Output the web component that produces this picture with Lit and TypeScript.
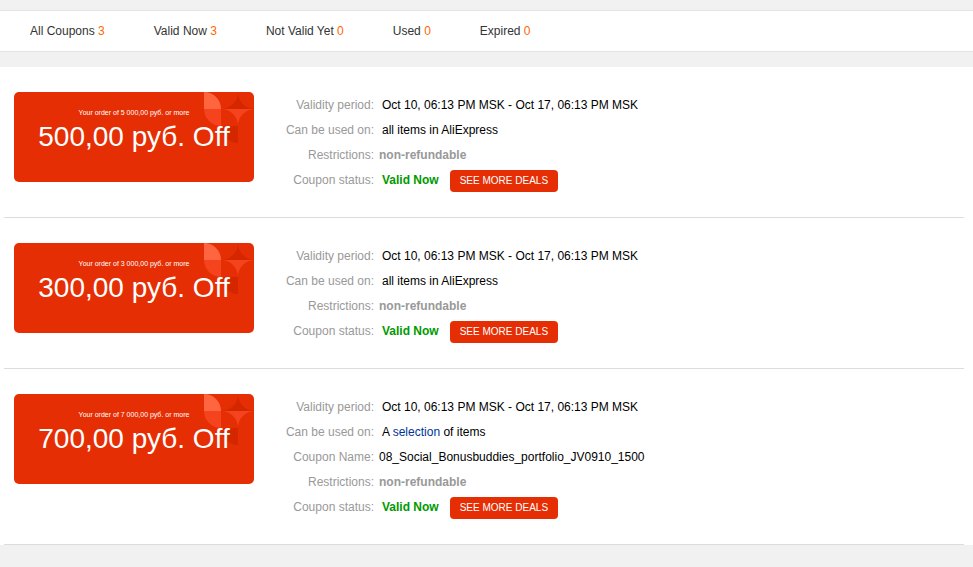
import { LitElement, html, css, TemplateResult } from "lit";
import { customElement, property } from "lit/decorators.js";

interface Coupon {
  amount: string;
  minimum: string;
  period: string;
  usedOn: TemplateResult;
  name?: string;
}

const PERIOD = "Oct 10, 06:13 PM MSK - Oct 17, 06:13 PM MSK";

const TABS: [string, number][] = [
  ["All Coupons", 3],
  ["Valid Now", 3],
  ["Not Valid Yet", 0],
  ["Used", 0],
  ["Expired", 0],
];

const COUPONS: Coupon[] = [
  { amount: "500,00", minimum: "5 000,00", period: PERIOD, usedOn: html`all items in AliExpress` },
  { amount: "300,00", minimum: "3 000,00", period: PERIOD, usedOn: html`all items in AliExpress` },
  {
    amount: "700,00",
    minimum: "7 000,00",
    period: PERIOD,
    usedOn: html`A <a class="link" href="#selection">selection</a> of items`,
    name: "08_Social_Bonusbuddies_portfolio_JV0910_1500",
  },
];

@customElement("coupon-card")
export class CouponCard extends LitElement {
  static styles = css`
    :host {
      display: block;
    }
    .card {
      position: relative;
      box-sizing: border-box;
      min-height: 90px;
      padding-top: 15px;
      border-radius: 5px;
      overflow: hidden;
      background: #e62e04;
      color: #fff;
      text-align: center;
    }
    .ornament {
      position: absolute;
      top: 0;
      right: 0;
      width: 50px;
      height: 51px;
    }
    .minimum,
    .amount {
      position: relative;
      margin: 0;
    }
    .minimum {
      font-size: 7px;
      line-height: 12px;
    }
    .amount {
      font-size: 28px;
      line-height: 36px;
    }
  `;

  @property() amount = "";
  @property() minimum = "";

  render() {
    return html`
      <div class="card">
        <svg class="ornament" viewBox="0 0 50 51" aria-hidden="true">
          <path fill="#ff6640" d="M0 0A17 17 0 0 1 17 17H0Z" />
          <path fill="#f5431e" d="M0 17H17V34A17 17 0 0 1 0 17Z" />
          <path fill="#d42700" d="M17 17A17 17 0 0 0 34 0A17 17 0 0 0 50 17Z" />
          <path fill="#f5431e" d="M17 17A17 17 0 0 1 34 34A17 17 0 0 1 50 17Z" />
          <path fill="#d42700" d="M17 34H34V51A17 17 0 0 1 17 34Z" />
        </svg>
        <p class="minimum">Your order of ${this.minimum} руб. or more</p>
        <p class="amount">${this.amount} руб. Off</p>
      </div>
    `;
  }
}

@customElement("app-root")
export class AppRoot extends LitElement {
  static styles = css`
    :host {
      display: block;
      box-sizing: border-box;
      min-height: 100vh;
      padding-top: 10px;
      background: #f1f1f1;
      color: #000;
      font: 12px/25px "Liberation Sans", Arial, sans-serif;
    }
    .tabs {
      display: flex;
      flex-wrap: wrap;
      gap: 0 49px;
      padding: 0 30px;
      margin-bottom: 15px;
      border: solid #e4e4e4;
      border-width: 1px 0;
      background: #fff;
      line-height: 40px;
    }
    .tab {
      color: #333;
      text-decoration: none;
    }
    .count {
      color: #f60;
    }
    .list {
      margin: 0;
      padding: 0 9px 0 4px;
      list-style: none;
      background: #fff;
    }
    .coupon {
      display: grid;
      grid-template-columns: 240px 1fr;
      gap: 20px;
      align-items: start;
      padding: 25px 10px 24px;
      border-bottom: 1px solid #dcdcdc;
    }
    .details {
      display: grid;
      grid-template-columns: 100px 1fr;
      column-gap: 5px;
      margin: 0;
      padding-top: 1px;
    }
    .label {
      color: #999;
      text-align: right;
    }
    .value {
      display: flex;
      align-items: center;
      gap: 11px;
      height: 25px;
      margin: 0;
    }
    .inset {
      padding-left: 3px;
    }
    .muted {
      color: #999;
      font-weight: bold;
    }
    .status {
      color: #090;
    }
    .used {
      white-space: pre;
    }
    .link {
      color: #039;
      text-decoration: none;
    }
    .deals {
      height: 22px;
      padding: 0 10px;
      border: 0;
      border-radius: 4px;
      background: #e62e04;
      color: #fff;
      font: 10px/22px "Liberation Sans", Arial, sans-serif;
      cursor: pointer;
    }
  `;

  private renderCoupon(c: Coupon) {
    return html`
      <li class="coupon">
        <coupon-card amount=${c.amount} minimum=${c.minimum}></coupon-card>
        <dl class="details">
          <dt class="label">Validity period:</dt>
          <dd class="value inset">${c.period}</dd>
          <dt class="label">Can be used on:</dt>
          <dd class="value inset"><span class="used">${c.usedOn}</span></dd>
          ${c.name
            ? html`<dt class="label">Coupon Name:</dt>
                <dd class="value">${c.name}</dd>`
            : null}
          <dt class="label">Restrictions:</dt>
          <dd class="value muted">non-refundable</dd>
          <dt class="label">Coupon status:</dt>
          <dd class="value inset">
            <strong class="status">Valid Now</strong>
            <button class="deals" type="button">SEE MORE DEALS</button>
          </dd>
        </dl>
      </li>
    `;
  }

  render() {
    return html`
      <nav class="tabs">
        ${TABS.map(
          ([label, count]) =>
            html`<a class="tab" href="#coupons">${label} <span class="count">${count}</span></a>`
        )}
      </nav>
      <ul class="list">
        ${COUPONS.map((c) => this.renderCoupon(c))}
      </ul>
    `;
  }
}
